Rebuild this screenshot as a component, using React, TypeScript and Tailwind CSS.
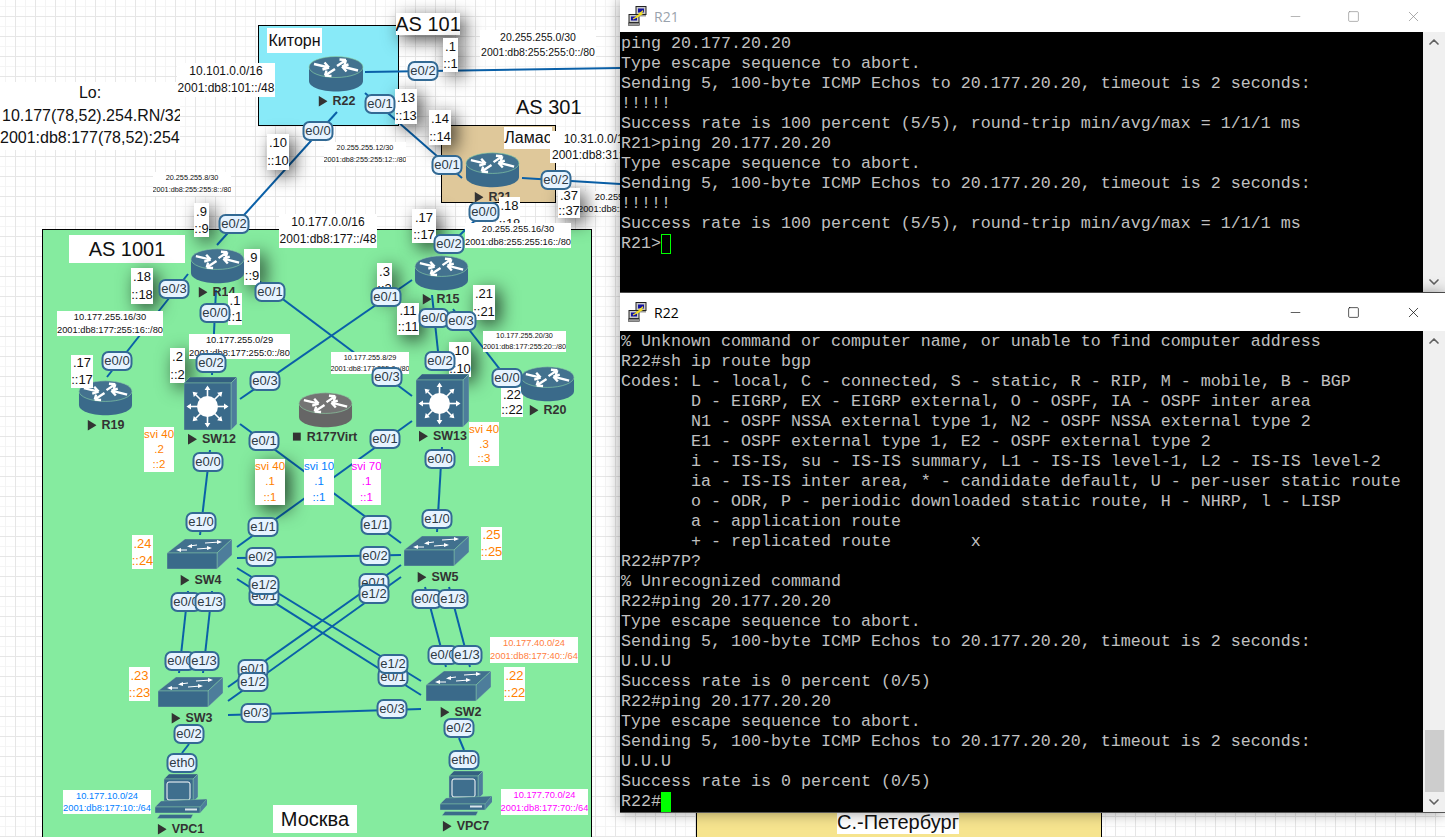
import React from 'react';
import { Minus, Square, X, ChevronUp, ChevronDown } from 'lucide-react';

type Label = {
  x: number;
  y: number;
  w: number;
  h: number;
  lines: string[];
  size?: number;
  color?: string;
  shadow?: boolean;
};

const ORANGE = '#ff8000';
const BLUE = '#0080ff';
const PINK = '#ff00ff';

// drawn in order, before the nodes
const labels: Label[] = [
  { x: 177, y: 63, w: 98, h: 34, lines: ['10.101.0.0/16', '2001:db8:101::/48'], size: 12 },
  { x: 396, y: 13, w: 64, h: 22, lines: ['AS 101'], size: 20, shadow: true },
  { x: 443, y: 38, w: 15, h: 34, lines: ['.1', '::1'], size: 13, shadow: true },
  { x: 480, y: 30, w: 116, h: 30, lines: ['20.255.255.0/30', '2001:db8:255:255:0::/80'], size: 10.5 },
  { x: 395, y: 89, w: 22, h: 35, lines: ['.13', '::13'], size: 13, shadow: true },
  { x: 429, y: 110, w: 22, h: 35, lines: ['.14', '::14'], size: 13, shadow: true },
  { x: 267, y: 134, w: 22, h: 36, lines: ['.10', '::10'], size: 13, shadow: true },
  { x: 324, y: 142, w: 82, h: 24, lines: ['20.255.255.12/30', '2001:db8:255:255:12::/80'], size: 7.3 },
  { x: 153, y: 172, w: 78, h: 24, lines: ['20.255.255.8/30', '2001:db8:255:255:8::/80'], size: 7.3 },
  { x: 194, y: 203, w: 15, h: 34, lines: ['.9', '::9'], size: 13, shadow: true },
  { x: 412, y: 209, w: 24, h: 34, lines: ['.17', '::17'], size: 13, shadow: true },
  { x: 279, y: 214, w: 98, h: 34, lines: ['10.177.0.0/16', '2001:db8:177::/48'], size: 12 },
  { x: 550, y: 131, w: 94, h: 32, lines: ['10.31.0.0/16', '2001:db8:31::/48'], size: 12 },
  { x: 578, y: 191, w: 106, h: 24, lines: ['20.255.255.36/30', '2001:db8:255:255:36::/80'], size: 9.3 },
  { x: 558, y: 188, w: 22, h: 30, lines: ['.37', '::37'], size: 13, shadow: true },
  { x: 69, y: 235, w: 116, h: 28, lines: ['AS 1001'], size: 20 },
  { x: 131, y: 268, w: 22, h: 36, lines: ['.18', '::18'], size: 13, shadow: true },
  { x: 244, y: 249, w: 16, h: 36, lines: ['.9', '::9'], size: 13, shadow: true },
  { x: 377, y: 263, w: 15, h: 34, lines: ['.3', '::3'], size: 13, shadow: true },
  { x: 473, y: 285, w: 22, h: 35, lines: ['.21', '::21'], size: 13, shadow: true },
  { x: 397, y: 303, w: 22, h: 32, lines: ['.11', '::11'], size: 13, shadow: true },
  { x: 449, y: 342, w: 22, h: 35, lines: ['.10', '::10'], size: 13, shadow: true },
  { x: 170, y: 348, w: 15, h: 35, lines: ['.2', '::2'], size: 13, shadow: true },
  { x: 57, y: 311, w: 106, h: 25, lines: ['10.177.255.16/30', '2001:db8:177:255:16::/80'], size: 9.3 },
  { x: 189, y: 334, w: 101, h: 25, lines: ['10.177.255.0/29', '2001:db8:177:255:0::/80'], size: 9.3 },
  { x: 483, y: 331, w: 83, h: 21, lines: ['10.177.255.20/30', '2001:db8:177:255:20::/80'], size: 7.3 },
  { x: 331, y: 352, w: 78, h: 22, lines: ['10.177.255.8/29', '2001:db8:177:255:8::/80'], size: 7.3 },
  { x: 501, y: 387, w: 22, h: 30, lines: ['.22', '::22'], size: 13 },
  { x: 144, y: 427, w: 30, h: 45, lines: ['svi 40', '.2', '::2'], size: 11.5, color: ORANGE },
  { x: 469, y: 422, w: 30, h: 44, lines: ['svi 40', '.3', '::3'], size: 11.5, color: ORANGE },
  { x: 255, y: 459, w: 30, h: 46, lines: ['svi 40', '.1', '::1'], size: 11.5, color: ORANGE, shadow: true },
  { x: 304, y: 459, w: 30, h: 46, lines: ['svi 10', '.1', '::1'], size: 11.5, color: BLUE },
  { x: 352, y: 459, w: 29, h: 46, lines: ['svi 70', '.1', '::1'], size: 11.5, color: PINK },
  { x: 132, y: 535, w: 21, h: 34, lines: ['.24', '::24'], size: 13, color: ORANGE },
  { x: 481, y: 527, w: 21, h: 33, lines: ['.25', '::25'], size: 13, color: ORANGE },
  { x: 129, y: 667, w: 21, h: 34, lines: ['.23', '::23'], size: 13, color: ORANGE },
  { x: 504, y: 667, w: 21, h: 34, lines: ['.22', '::22'], size: 13, color: ORANGE },
  { x: 490, y: 637, w: 88, h: 26, lines: ['10.177.40.0/24', '2001:db8:177:40::/64'], size: 9.3, color: '#ff8040' },
  { x: 63, y: 790, w: 88, h: 24, lines: ['10.177.10.0/24', '2001:db8:177:10::/64'], size: 9.3, color: BLUE },
  { x: 501, y: 789, w: 87, h: 26, lines: ['10.177.70.0/24', '2001:db8:177:70::/64'], size: 9.3, color: PINK },
  { x: 273, y: 805, w: 84, h: 28, lines: ['Москва'], size: 20 },
];

// these sit on top of the node icons
const topLabels: Label[] = [
  { x: 71, y: 355, w: 22, h: 33, lines: ['.17', '::17'], size: 13 },
  { x: 228, y: 293, w: 14, h: 32, lines: ['.1', '::1'], size: 13 },
  { x: 499, y: 197, w: 21, h: 36, lines: ['.18', '::18'], size: 13 },
  { x: 465, y: 223, w: 106, h: 25, lines: ['20.255.255.16/30', '2001:db8:255:255:16::/80'], size: 9.3 },
];

const links: number[][] = [
  [365, 72, 620, 68],
  [365, 93, 462, 178],
  [337, 112, 217, 245],
  [522, 178, 620, 184],
  [442, 252, 484, 212],
  [188, 274, 107, 377],
  [248, 273, 412, 396],
  [412, 280, 240, 399],
  [216, 290, 212, 375],
  [432, 295, 440, 370],
  [453, 309, 512, 385],
  [240, 424, 401, 543],
  [412, 421, 237, 547],
  [210, 450, 200, 535],
  [442, 447, 437, 532],
  [237, 558, 401, 555],
  [237, 568, 421, 681],
  [237, 579, 421, 695],
  [401, 565, 228, 687],
  [401, 577, 228, 701],
  [228, 715, 421, 709],
  [188, 591, 179, 673],
  [212, 591, 203, 673],
  [425, 587, 446, 667],
  [449, 587, 470, 667],
  [189, 744, 182, 753],
  [459, 738, 464, 750],
];

const chips: [string, number, number][] = [
  ['e0/2', 423, 71], ['e0/1', 380, 104], ['e0/0', 318, 131], ['e0/1', 447, 165],
  ['e0/2', 556, 180], ['e0/0', 484, 212], ['e0/2', 234, 224], ['e0/2', 449, 244],
  ['e0/3', 174, 289], ['e0/1', 270, 292], ['e0/1', 386, 297], ['e0/0', 215, 313],
  ['e0/0', 434, 318], ['e0/3', 461, 321], ['e0/0', 117, 361], ['e0/2', 211, 363],
  ['e0/2', 440, 361], ['e0/3', 265, 381], ['e0/3', 387, 377], ['e0/0', 507, 378],
  ['e0/1', 264, 441], ['e0/1', 385, 439], ['e0/0', 208, 462], ['e0/0', 440, 459],
  ['e1/0', 201, 522], ['e1/0', 437, 519], ['e1/1', 263, 527], ['e1/1', 376, 525],
  ['e0/2', 261, 557], ['e0/2', 375, 556], ['e0/1', 264, 596], ['e1/2', 264, 585],
  ['e0/1', 374, 583], ['e1/2', 374, 594], ['e0/0', 186, 602], ['e1/3', 210, 602],
  ['e0/0', 427, 599], ['e1/3', 453, 599], ['e0/0', 180, 661], ['e1/3', 204, 661],
  ['e0/0', 443, 655], ['e1/3', 467, 655], ['e0/1', 393, 677], ['e1/2', 393, 664],
  ['e0/1', 253, 669], ['e1/2', 253, 682], ['e0/3', 256, 713], ['e0/3', 392, 709],
  ['e0/2', 189, 734], ['e0/2', 459, 728], ['eth0', 182, 763], ['eth0', 464, 760],
];

function Router({ grey }: { grey?: boolean }) {
  const side = grey ? '#666666' : '#3a6a8a';
  const top = grey ? '#747474' : '#43728f';
  const arrows = [
    'M6 8 L21 11.5 M21 11.5 L14.5 13.5 M21 11.5 L16.5 6.5',
    'M29 10 L38 4 M38 4 L31.5 3.5 M38 4 L36.5 9',
    'M27 13 L17 19.5 M17 19.5 L23.5 20 M17 19.5 L18.5 14.5',
    'M50 14.5 L34 10.5 M34 10.5 L40.5 8.5 M34 10.5 L38.5 15.5',
  ];
  return (
    <svg viewBox="0 0 56 36" className="w-full h-full">
      <path d="M1 11 V25 C1 31 13 35.5 28 35.5 S55 31 55 25 V11 Z" fill={side} />
      <ellipse cx="28" cy="11" rx="27" ry="10.5" fill={top} stroke="#8fd8a8" strokeWidth="0.6" />
      {arrows.map((d) => (
        <path key={d} d={d} fill="none" stroke="#ffffff" strokeWidth="2.4" />
      ))}
    </svg>
  );
}

function CoreSwitch() {
  const angles = [0, 45, 90, 135, 180, 225, 270, 315];
  return (
    <svg viewBox="0 0 53 53" className="w-full h-full">
      <polygon points="0,6 6,0 53,0 47,6" fill="#336080" stroke="#8fd8a8" strokeWidth="0.4" />
      <polygon points="47,6 53,0 53,47 47,53" fill="#4d7d9b" stroke="#8fd8a8" strokeWidth="0.4" />
      <rect x="0" y="6" width="47" height="47" fill="#3a6a8a" stroke="#8fd8a8" strokeWidth="0.4" />
      <circle cx="23.5" cy="29.5" r="10.5" fill="#ffffff" />
      {angles.map((a) => (
        <g key={a} transform={`rotate(${a} 23.5 29.5)`}>
          <path d="M33 29.5 H43" stroke="#ffffff" strokeWidth="1.6" />
          <polygon points="44.5,29.5 40,26.6 40,32.4" fill="#ffffff" />
        </g>
      ))}
    </svg>
  );
}

function AccessSwitch() {
  return (
    <svg viewBox="0 0 65 30" className="w-full h-full">
      <polygon points="0,14 18,0 65,0 50,14" fill="#41708e" stroke="#8fd8a8" strokeWidth="0.4" />
      <polygon points="50,14 65,0 65,16 50,30" fill="#4d7d9b" stroke="#8fd8a8" strokeWidth="0.4" />
      <rect x="0" y="14" width="50" height="16" fill="#3a6a8a" stroke="#8fd8a8" strokeWidth="0.4" />
      <path d="M22 7 L30 6 M38 4 L53 3 M11 11 L20 11 M30 10 L43 9" stroke="#ffffff" strokeWidth="1" />
      <polygon points="20,7.5 25,5 25,9" fill="#ffffff" />
      <polygon points="55,3 50,1 50,5" fill="#ffffff" />
      <polygon points="9,11 14,9 14,13" fill="#ffffff" />
      <polygon points="45,9 40,7 40,11" fill="#ffffff" />
    </svg>
  );
}

function Computer() {
  return (
    <svg viewBox="0 0 52 46" className="w-full h-full">
      <polygon points="9,6 14,1 43,1 38,6" fill="#336080" stroke="#8fd8a8" strokeWidth="0.4" />
      <polygon points="38,6 43,1 43,24 38,29" fill="#4d7d9b" stroke="#8fd8a8" strokeWidth="0.4" />
      <rect x="9" y="6" width="29" height="24" fill="#3a6a8a" stroke="#8fd8a8" strokeWidth="0.4" />
      <rect x="12" y="9" width="23" height="18" rx="2" fill="#3f6f8e" stroke="#ffffff" strokeWidth="1" />
      <polygon points="0,34 6,28 52,26 45,34" fill="#41708e" stroke="#8fd8a8" strokeWidth="0.4" />
      <polygon points="45,34 52,26 52,32 45,40" fill="#4d7d9b" />
      <rect x="0" y="34" width="45" height="6" fill="#3a6a8a" stroke="#8fd8a8" strokeWidth="0.4" />
      <rect x="30" y="35.5" width="12" height="2" fill="#d8e4ea" />
      <polygon points="2,45.5 5,41.5 38,41.5 36,45.5" fill="#3a6a8a" stroke="#8fd8a8" strokeWidth="0.4" />
    </svg>
  );
}

function Node({
  name,
  x,
  y,
  w,
  h,
  lx,
  ly,
  stopped,
  children,
}: {
  name: string;
  x: number;
  y: number;
  w: number;
  h: number;
  lx: number;
  ly: number;
  stopped?: boolean;
  children: React.ReactNode;
}) {
  return (
    <>
      <div className="absolute" style={{ left: x, top: y, width: w, height: h }}>
        {children}
      </div>
      <div
        className="absolute -translate-x-1/2 -translate-y-1/2 flex items-center gap-[5px] text-[12.5px] font-bold text-[#333333] whitespace-nowrap"
        style={{ left: lx, top: ly }}
      >
        <svg viewBox="0 0 9 11" className="w-[9px] h-[11px]">
          {stopped ? <rect x="0" y="1" width="8" height="8" fill="#333333" /> : <polygon points="0,0 9,5.5 0,11" fill="#333333" />}
        </svg>
        {name}
      </div>
    </>
  );
}

function AddrLabel({ l }: { l: Label }) {
  return (
    <div
      className={`absolute bg-white flex flex-col items-center overflow-hidden whitespace-nowrap ${
        l.shadow ? 'shadow-[5px_5px_18px_rgba(0,0,0,0.7)]' : ''
      }`}
      style={{ left: l.x, top: l.y, width: l.w, height: l.h, fontSize: l.size, color: l.color ?? '#111111' }}
    >
      {l.lines.map((t) => (
        <span key={t} style={{ lineHeight: `${l.h / l.lines.length}px` }}>
          {t}
        </span>
      ))}
    </div>
  );
}

function PuttyIcon() {
  return (
    <svg viewBox="0 0 20 20" className="w-5 h-5">
      <rect x="8" y="0.5" width="10" height="8" fill="#c8c8c8" stroke="#222222" />
      <rect x="10" y="2.5" width="6" height="4" fill="#1414a0" />
      <rect x="1" y="8.5" width="10" height="8" fill="#c8c8c8" stroke="#222222" />
      <rect x="3" y="10.5" width="6" height="4" fill="#1414a0" />
      <rect x="0.5" y="17" width="11" height="2.5" fill="#9a9a9a" stroke="#444444" strokeWidth="0.6" />
      <rect x="8" y="9" width="10" height="1.5" fill="#9a9a9a" />
      <polygon points="15,5 11,8 13,8.5 5,13 10,10.5 9,10 14,8 12,7.5" fill="#f5e020" stroke="#f5e020" strokeWidth="1.2" />
    </svg>
  );
}

function TermWindow({
  title,
  titleH,
  height,
  pad,
  active,
  lines,
  thumb,
  children,
}: {
  title: string;
  titleH: string;
  height: string;
  pad: string;
  active: boolean;
  lines: string[];
  thumb?: boolean;
  children: React.ReactNode;
}) {
  return (
    <div
      className={`absolute left-[620px] right-0 ${height} flex flex-col bg-white shadow-[0_0_14px_rgba(0,0,0,0.4)] border-b border-[#555555]`}
    >
      <div className={`${titleH} shrink-0 flex items-center pl-[8px] bg-white`}>
        <PuttyIcon />
        <span className={`ml-[6px] text-[14px] font-['Open_Sans',sans-serif] ${active ? 'text-black' : 'text-[#9aa3ad]'}`}>
          {title}
        </span>
        <div className={`ml-auto flex items-center ${active ? 'text-black' : 'text-[#8a8a8a]'}`}>
          <Minus size={15} strokeWidth={1} className="mr-[44px]" />
          <Square size={13} strokeWidth={1.2} className="mr-[45px]" />
          <X size={17} strokeWidth={1} className="mr-[23px]" />
        </div>
      </div>
      <div className="flex-1 min-h-0 flex">
        <div className={`flex-1 bg-black px-px ${pad} overflow-hidden font-['Liberation_Mono',monospace] text-[16.67px] leading-[20px] text-[#c0c0c0] whitespace-pre`}>
          {lines.map((line, i) => (
            <div key={i} className="h-5">
              {line}
              {i === lines.length - 1 && children}
            </div>
          ))}
        </div>
        <div className="w-[22px] bg-[#f0f0f0] flex flex-col items-center text-[#606060]">
          <ChevronUp size={16} strokeWidth={2.5} className="mt-[2px]" />
          <div className="flex-1" />
          {thumb && <div className="w-[19px] h-[62px] bg-[#cdcdcd]" />}
          <ChevronDown size={16} strokeWidth={2.5} className="my-[2px]" />
        </div>
      </div>
    </div>
  );
}

const r21Lines = [
  'ping 20.177.20.20',
  'Type escape sequence to abort.',
  'Sending 5, 100-byte ICMP Echos to 20.177.20.20, timeout is 2 seconds:',
  '!!!!!',
  'Success rate is 100 percent (5/5), round-trip min/avg/max = 1/1/1 ms',
  'R21>ping 20.177.20.20',
  'Type escape sequence to abort.',
  'Sending 5, 100-byte ICMP Echos to 20.177.20.20, timeout is 2 seconds:',
  '!!!!!',
  'Success rate is 100 percent (5/5), round-trip min/avg/max = 1/1/1 ms',
  'R21>',
];

const r22Lines = [
  '% Unknown command or computer name, or unable to find computer address',
  'R22#sh ip route bgp',
  'Codes: L - local, C - connected, S - static, R - RIP, M - mobile, B - BGP',
  '       D - EIGRP, EX - EIGRP external, O - OSPF, IA - OSPF inter area',
  '       N1 - OSPF NSSA external type 1, N2 - OSPF NSSA external type 2',
  '       E1 - OSPF external type 1, E2 - OSPF external type 2',
  '       i - IS-IS, su - IS-IS summary, L1 - IS-IS level-1, L2 - IS-IS level-2',
  '       ia - IS-IS inter area, * - candidate default, U - per-user static route',
  '       o - ODR, P - periodic downloaded static route, H - NHRP, l - LISP',
  '       a - application route',
  '       + - replicated route        x',
  'R22#P7P?',
  '% Unrecognized command',
  'R22#ping 20.177.20.20',
  'Type escape sequence to abort.',
  'Sending 5, 100-byte ICMP Echos to 20.177.20.20, timeout is 2 seconds:',
  'U.U.U',
  'Success rate is 0 percent (0/5)',
  'R22#ping 20.177.20.20',
  'Type escape sequence to abort.',
  'Sending 5, 100-byte ICMP Echos to 20.177.20.20, timeout is 2 seconds:',
  'U.U.U',
  'Success rate is 0 percent (0/5)',
  'R22#',
];

export default function App() {
  return (
    <div className="relative w-[1445px] h-[837px] overflow-hidden bg-white font-['Liberation_Sans',sans-serif] bg-[linear-gradient(to_right,#e6e6e6_1px,transparent_1px),linear-gradient(to_bottom,#e6e6e6_1px,transparent_1px),linear-gradient(to_right,#f4f4f4_1px,transparent_1px),linear-gradient(to_bottom,#f4f4f4_1px,transparent_1px)] bg-[size:20px_20px,20px_20px,10px_10px,10px_10px] bg-[position:15px_16px,15px_16px,5px_6px,5px_6px]">
      {/* Site boxes */}
      <div className="absolute left-[258px] top-[25px] w-[141px] h-[101px] bg-[#88eaf8] border border-black" />
      <div className="absolute left-[441px] top-[125px] w-[115px] h-[78px] bg-[#dfc89a] border border-black" />
      <div className="absolute left-[42px] top-[229px] w-[550px] h-[640px] bg-[#85eb9f] border border-black" />
      <div className="absolute left-[696px] top-[800px] w-[406px] h-[60px] bg-[#f6e48e] border border-black" />
      <div className="absolute left-[837px] top-[810px] w-[122px] h-[24px] bg-white text-[20px] leading-[24px] text-center text-[#111111] whitespace-nowrap">
        С.-Петербург
      </div>

      {/* Lo block */}
      <div className="absolute left-0 top-[82px] w-[180px] h-[68px] bg-white overflow-hidden flex flex-col text-[16px] leading-[22.5px] text-[#111111] whitespace-nowrap">
        <span className="self-center">Lo:</span>
        <span className="pl-[2px]">10.177(78,52).254.RN/32</span>
        <span>2001:db8:177(78,52):254::RN/128</span>
      </div>

      <div className="absolute left-[267px] top-[28px] w-[55px] h-[25px] bg-white text-[16px] leading-[25px] text-center text-[#111111]">
        Киторн
      </div>
      <div className="absolute left-[504px] top-[127px] w-[48px] h-[22px] bg-white text-[16px] leading-[22px] text-center text-[#111111] whitespace-nowrap overflow-hidden">
        Ламас
      </div>
      <div className="absolute left-[516px] top-[98px] text-[20px] leading-[18px] text-[#111111]">AS 301</div>

      {/* Links */}
      <svg className="absolute inset-0 w-full h-full" viewBox="0 0 1445 837">
        {links.map(([x1, y1, x2, y2], i) => (
          <line key={i} x1={x1} y1={y1} x2={x2} y2={y2} stroke="#0a60a8" strokeWidth="2" />
        ))}
      </svg>

      {labels.map((l, i) => (
        <AddrLabel key={i} l={l} />
      ))}

      {/* Nodes */}
      <Node name="R22" x={308} y={56} w={56} h={36} lx={337} ly={101}><Router /></Node>
      <Node name="R21" x={465} y={152} w={55} h={36} lx={493} ly={197}><Router /></Node>
      <Node name="R14" x={190} y={248} w={55} h={36} lx={217} ly={292}><Router /></Node>
      <Node name="R15" x={414} y={255} w={55} h={36} lx={441} ly={299}><Router /></Node>
      <Node name="R19" x={78} y={380} w={55} h={36} lx={106} ly={425}><Router /></Node>
      <Node name="R20" x={520} y={366} w={55} h={36} lx={548} ly={410}><Router /></Node>
      <Node name="R177Virt" x={298} y={392} w={55} h={36} lx={325} ly={437} stopped><Router grey /></Node>
      <Node name="SW12" x={184} y={377} w={53} h={53} lx={212} ly={439}><CoreSwitch /></Node>
      <Node name="SW13" x={416} y={374} w={53} h={53} lx={443} ly={436}><CoreSwitch /></Node>
      <Node name="SW4" x={167} y={539} w={65} h={30} lx={201} ly={580}><AccessSwitch /></Node>
      <Node name="SW5" x={404} y={536} w={65} h={30} lx={438} ly={577}><AccessSwitch /></Node>
      <Node name="SW3" x={158} y={677} w={65} h={30} lx={192} ly={718}><AccessSwitch /></Node>
      <Node name="SW2" x={426} y={671} w={65} h={30} lx={461} ly={712}><AccessSwitch /></Node>
      <Node name="VPC1" x={155} y={773} w={52} h={46} lx={181} ly={829}><Computer /></Node>
      <Node name="VPC7" x={440} y={770} w={52} h={46} lx={466} ly={826}><Computer /></Node>

      {topLabels.map((l, i) => (
        <AddrLabel key={i} l={l} />
      ))}

      {chips.map(([text, x, y], i) => (
        <div
          key={i}
          className="absolute w-[31px] h-[20px] -translate-x-1/2 -translate-y-1/2 flex items-center justify-center rounded-[7px] border-2 border-[#336a94] bg-[#e6f3ff] text-[13px] text-[#2d3a44] overflow-hidden"
          style={{ left: x, top: y }}
        >
          {text}
        </div>
      ))}

      {/* PuTTY windows */}
      <TermWindow title="R21" titleH="h-8" height="top-0 h-[293px]" pad="pt-[2px]" active={false} lines={r21Lines}>
        <span className="inline-block align-top w-[10px] h-[20px] border border-[#00ff00]" />
      </TermWindow>
      <TermWindow title="R22" titleH="h-[38px]" height="top-[293px] h-[520px]" pad="pt-px" active lines={r22Lines} thumb>
        <span className="inline-block align-top w-[10px] h-[20px] bg-[#00ff00]" />
      </TermWindow>
    </div>
  );
}
